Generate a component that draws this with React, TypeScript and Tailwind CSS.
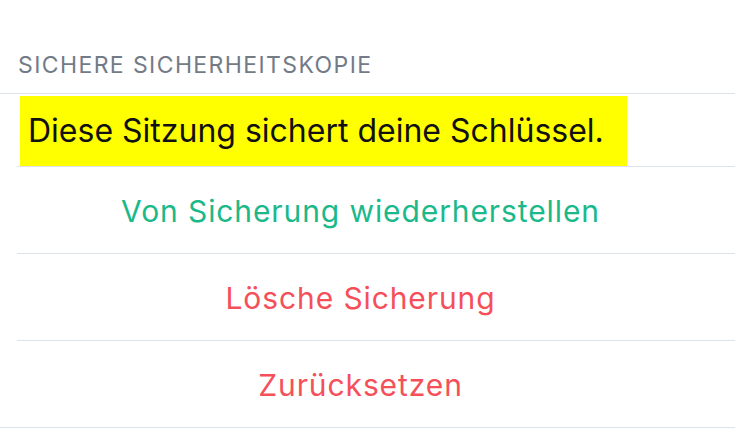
const ACTIONS = [
  { label: "Von Sicherung wiederherstellen", color: "text-[#1bb98a]" },
  { label: "Lösche Sicherung", color: "text-[#f5505a]" },
  { label: "Zurücksetzen", color: "text-[#f5505a]" },
];

export default function App() {
  return (
    <div className="h-[430px] w-[735px] overflow-hidden bg-white font-['Inter',sans-serif]">
      <div className="px-[18px] pt-[50px] pb-[13px] text-[23px] leading-[30px] tracking-[1.4px] text-[#737b87]">
        SICHERE SICHERHEITSKOPIE
      </div>
      <div className="border-t border-[#dde3ea]">
        <div className="pl-[20px] pt-[2px]">
          <div className="flex h-[70px] w-[607px] items-center bg-[#ffff00] px-[8px] text-[32px] text-[#111111]">
            Diese Sitzung sichert deine Schlüssel.
          </div>
        </div>
        {ACTIONS.map((action) => (
          <div key={action.label} className="ml-[17px] border-t border-[#dde3ea]">
            <div
              className={`-ml-[17px] flex h-[86px] items-center justify-center pt-[3px] pr-[14px] text-[30px] tracking-[0.9px] ${action.color}`}
            >
              {action.label}
            </div>
          </div>
        ))}
        <div className="border-t border-[#dde3ea]" />
      </div>
    </div>
  );
}
